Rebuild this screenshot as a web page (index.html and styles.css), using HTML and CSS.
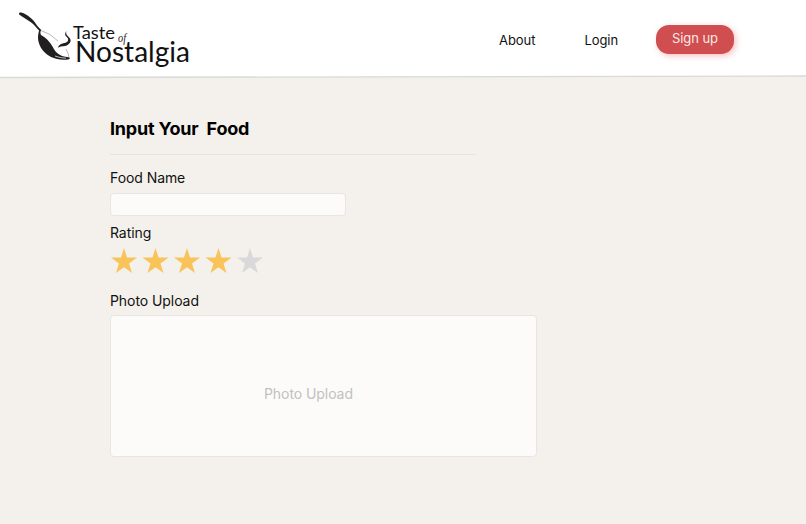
FILE: index.html
```html
<!DOCTYPE html>
<html lang="en">
<head>
<meta charset="utf-8">
<title>Taste of Nostalgia</title>
<link rel="stylesheet" href="styles.css">
</head>
<body>
<header class="header">
  <svg class="logo" width="200" height="74" viewBox="0 0 200 74" role="img" aria-label="Taste of Nostalgia">
    <g fill="#211f20">
      <path d="M19 13.500C19.300 12 22 12.300 25 14C29 16.200 33 19.500 35 22.500C36.500 25 38 27 41 29.800L39.800 31.300C37 28.500 35 25.800 32.500 23.500C29 20.500 25 18.500 22 16.500C20 15.200 18.800 14.500 19 13.500Z"/>
      <path d="M39.300 29.500L41 30C40.200 32 40.200 33.500 41 35C46 37.500 50 42 52.500 46.500C54.500 50.500 56.500 53.500 61 55.500C63.500 56.500 67 57 69.500 57.500C70.200 58.500 69.500 59.500 68 59.500C61 60.200 53 59 47 54.500C40 49 37 41 38.300 34Z"/>
      <path d="M66.500 31C64.500 33.500 64.600 35.200 67 37.200C69 39 68.500 41.500 65.500 42.800C62.500 43.500 59 44 58 48C60.500 45.200 64 47.200 67.500 45C71.500 42.500 71.500 39.500 68.700 37C66.500 35 65.500 33.800 66.500 31Z"/>
    </g>
    <path d="M55 56Q60 58 66 58.200" fill="none" stroke="#fff" stroke-width=".7"/>
    <path d="M41 30.500Q50 33 58 41M66 49Q68.500 53 69 58" fill="none" stroke="#888" stroke-width=".6"/>
    <text class="logo-text" x="73" y="38.700" font-size="18" textLength="42" lengthAdjust="spacingAndGlyphs">Taste</text>
    <text class="logo-of" x="118" y="42" font-size="13" textLength="8" lengthAdjust="spacingAndGlyphs">of</text>
    <text class="logo-text" x="75" y="62" font-size="28" textLength="115" lengthAdjust="spacingAndGlyphs">Nostalgia</text>
  </svg>
  <nav class="nav">
    <a class="link">About</a>
    <a class="link">Login</a>
    <a class="signup">Sign up</a>
  </nav>
</header>
<svg class="edge" width="806" height="4" viewBox="0 0 806 4" aria-hidden="true">
  <path d="M0 0H806V1L0 2.500Z" fill="#fff"/>
  <path d="M0 2.500L806 1" stroke="#d9d9d7" stroke-width="1.300"/>
</svg>
<main class="main">
  <h1 class="title">Input Your&nbsp; Food</h1>
  <hr class="rule">
  <label class="label" for="food">Food Name</label>
  <input class="input" id="food" type="text">
  <div class="label rating">Rating</div>
  <svg class="stars" width="158" height="28" viewBox="0 0 158 28" role="img" aria-label="4 out of 5">
    <defs><path id="star" d="M14 0L17.060 9.600H27L19 15.500L22 25.100L14 19.200L6 25.100L9 15.500L1 9.600H10.940Z"/></defs>
    <g fill="#f8c358">
      <use href="#star"/>
      <use href="#star" x="31.500"/>
      <use href="#star" x="63"/>
      <use href="#star" x="94.500"/>
    </g>
    <use href="#star" x="126" fill="#d9d9d9"/>
  </svg>
  <div class="label">Photo Upload</div>
  <div class="upload">Photo Upload</div>
</main>
</body>
</html>
```
FILE: styles.css
```css
* { box-sizing: border-box; }
body {
  margin: 0;
  min-height: 524px;
  background: #f4f1ec;
  color: #111;
  font-family: Inter, "Liberation Sans", sans-serif;
  font-size: 14px;
  letter-spacing: -.07px;
}
.header {
  display: flex;
  justify-content: space-between;
  height: 75px;
  padding-right: 72px;
  background: #fff;
}
.logo { display: block; letter-spacing: 0; }
.logo-text { font-family: Lato, sans-serif; fill: #111; }
.logo-of { font-family: "Liberation Serif", serif; font-style: italic; fill: #222; }
.nav {
  display: flex;
  align-items: flex-start;
  padding-top: 24px;
  font-size: 13px;
}
.link { line-height: 32px; margin-right: 49px; }
.link + .link { margin-right: 38px; }
.signup {
  width: 78px;
  height: 29px;
  margin-top: 1px;
  border-radius: 13px;
  background: #d04e4f;
  box-shadow: 2px 2px 6px rgba(240, 78, 79, .35);
  color: #fbe9e6;
  line-height: 27px;
  text-align: center;
}
.edge { display: block; }
.main { padding: 38px 0 0 110px; }
.title { margin: 0; font-size: 18px; line-height: 24px; font-weight: 700; letter-spacing: -.2px; color: #000; }
.rule { width: 366px; height: 1px; margin: 13px 0 14px; border: 0; background: #e6e4e0; }
.label { display: block; line-height: 18px; }
.input {
  display: block;
  width: 236px;
  height: 23px;
  margin: 6px 0 8px;
  padding: 0 8px;
  border: 1px solid #e8e6e2;
  border-radius: 4px;
  background: #fcfbf9;
  font: inherit;
}
.stars { display: block; margin: 6px 0 16px; }
.upload {
  display: flex;
  align-items: center;
  width: 427px;
  height: 142px;
  margin-top: 5px;
  padding: 15px 0 0 153px;
  border: 1px solid #e8e6e2;
  border-radius: 4px;
  background: #fcfbf9;
  color: #c1c1bf;
}
```
